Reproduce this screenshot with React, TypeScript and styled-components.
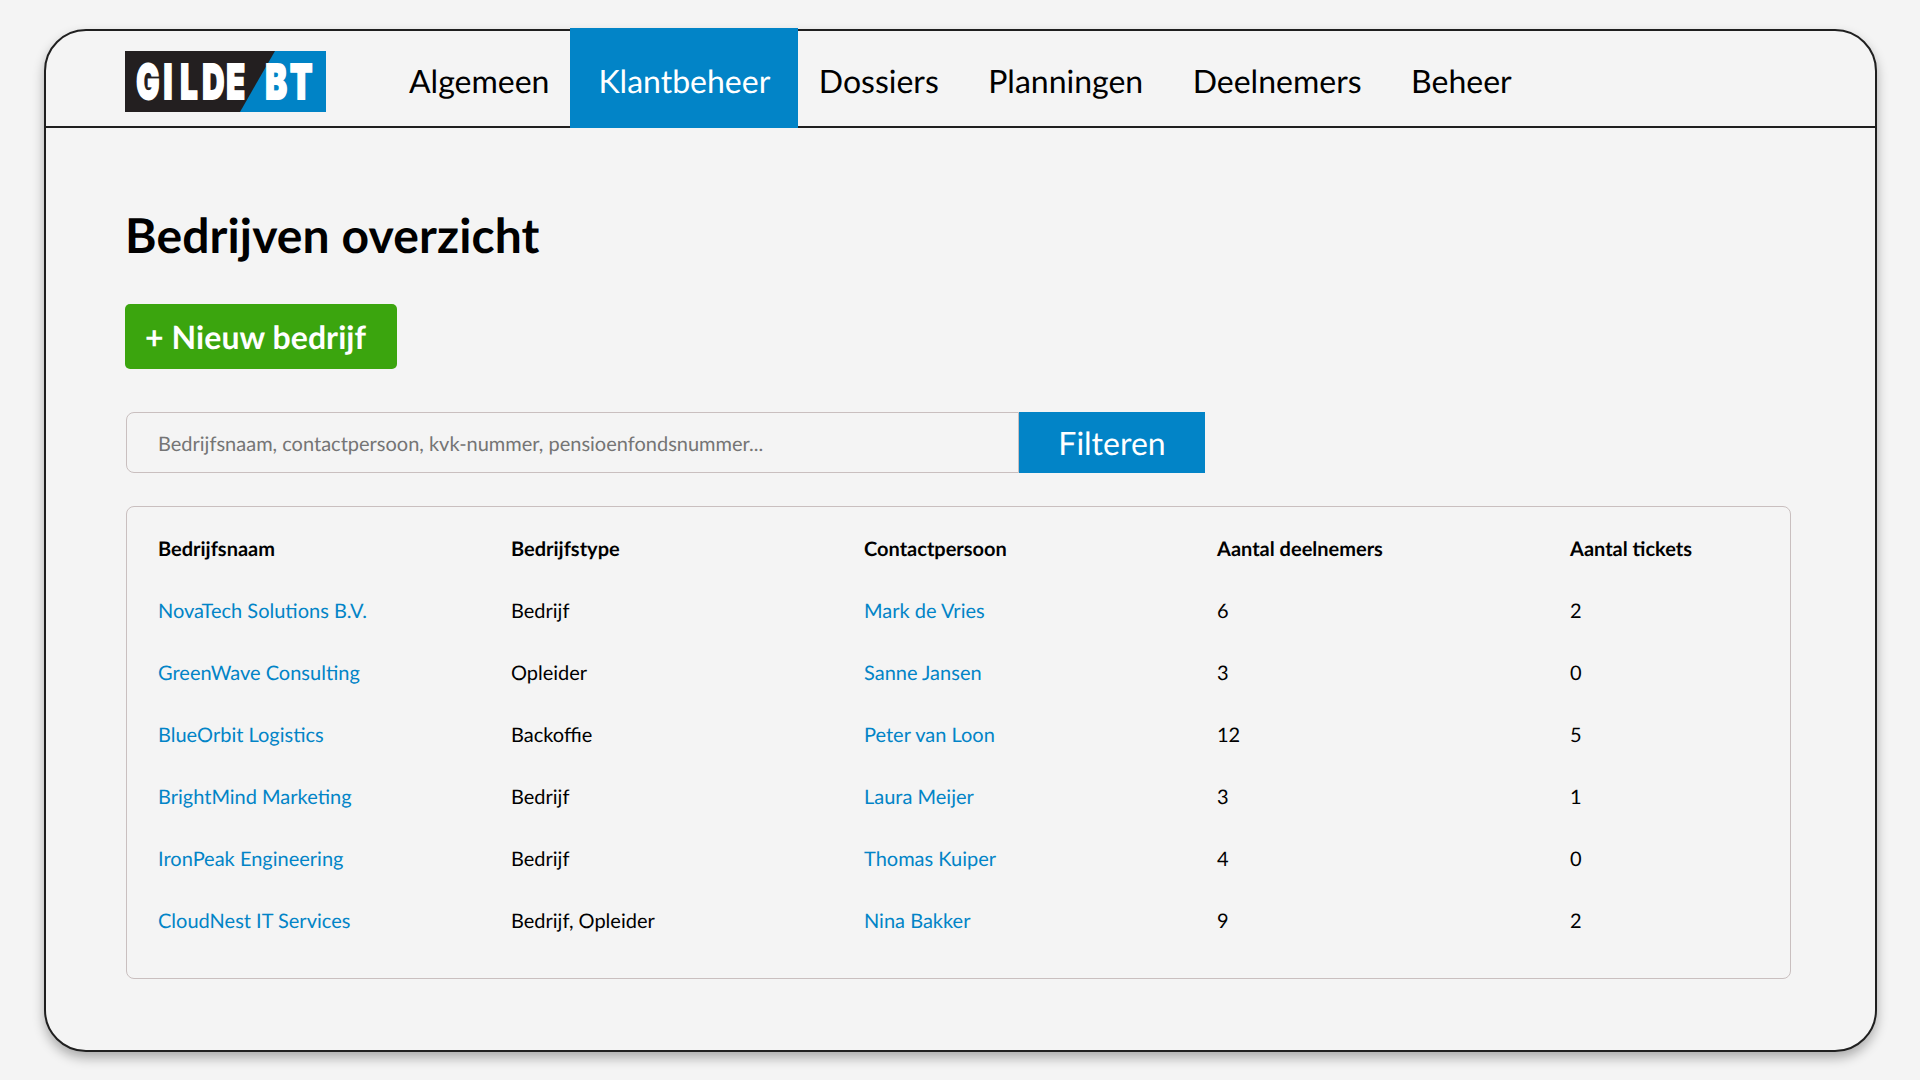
import React from "react";
import styled, { createGlobalStyle } from "styled-components";

const Global = createGlobalStyle`
  html, body { margin: 0; padding: 0; background: #f4f4f4; }
  body { font-family: Lato, "Noto Sans", sans-serif; color: #000; text-rendering: geometricPrecision; }
  * { box-sizing: border-box; }
`;

const Page = styled.div`
  width: 1920px;
  height: 1080px;
  padding: 29px 43px 28px 44px;
  overflow: hidden;
`;

const Frame = styled.div`
  height: 100%;
  border: 2px solid #1f1f1f;
  border-radius: 42px;
  background: #f4f4f4;
  box-shadow: 0 6px 12px rgba(0, 0, 0, 0.3);
`;

const Header = styled.header`
  height: 97px;
  border-bottom: 2px solid #1f1f1f;
  display: flex;
  align-items: flex-start;
  padding-left: 79px;
`;

const LogoWrap = styled.div`
  width: 201px;
  height: 61px;
  margin-top: 20px;
  margin-right: 58.25px;
  flex: none;
`;

const Nav = styled.nav`
  display: flex;
  margin-top: -3px;
`;

const NavItem = styled.a<{ $active?: boolean }>`
  height: 100px;
  margin: 0 ${(p) => (p.$active ? "-4.25px 0 -3.75px" : "0")};
  padding: 4px ${(p) => (p.$active ? "28px" : "24.75px")} 0;
  display: flex;
  align-items: center;
  font-size: 32px;
  color: ${(p) => (p.$active ? "#fff" : "#000")};
  background: ${(p) => (p.$active ? "#0284c7" : "transparent")};
  position: relative;
`;

const Main = styled.main`
  padding: 79px 69px 0 79px;
`;

const Title = styled.h1`
  margin: 0;
  font-size: 48px;
  font-weight: 700;
  line-height: 58px;
  letter-spacing: 0.12px;
`;

const AddButton = styled.button`
  display: block;
  margin-top: 39px;
  width: 272px;
  height: 65px;
  padding: 0 0 0 20px;
  border: none;
  border-radius: 5px;
  background: #3ba50e;
  color: #fff;
  font: 700 32px Lato, sans-serif;
  letter-spacing: 0.08px;
  text-rendering: geometricPrecision;
  text-align: left;
`;

const SearchRow = styled.form`
  display: flex;
  margin-top: 43px;
  margin-left: 1px;
`;

const SearchInput = styled.input`
  width: 893px;
  height: 61px;
  padding: 2px 31px 0;
  border: 1px solid #c9bfbf;
  border-radius: 8px 0 0 8px;
  background: transparent;
  font: 400 20px Lato, sans-serif;
  text-rendering: geometricPrecision;
  color: #000;
  &::placeholder { color: #757575; opacity: 1; }
`;

const FilterButton = styled.button`
  width: 186px;
  height: 61px;
  padding: 0;
  border: none;
  background: #0284c7;
  color: #fff;
  font: 400 32px Lato, sans-serif;
  text-rendering: geometricPrecision;
`;

const TableCard = styled.section`
  margin-top: 33px;
  margin-left: 1px;
  width: 1665px;
  height: 473px;
  padding: 11px 31px;
  border: 1px solid #c9bfbf;
  border-radius: 8px;
`;

const Table = styled.table`
  border-collapse: collapse;
  table-layout: fixed;
  width: 1765px;
`;

const Th = styled.th`
  width: 353px;
  height: 62px;
  padding: 0;
  text-align: left;
  font-size: 20px;
  font-weight: 700;
`;

const Td = styled.td`
  height: 62px;
  padding: 0;
  font-size: 20px;
`;

const CellLink = styled.a`
  color: #0284c7;
`;

const rows = [
  ["NovaTech Solutions B.V.", "Bedrijf", "Mark de Vries", "6", "2"],
  ["GreenWave Consulting", "Opleider", "Sanne Jansen", "3", "0"],
  ["BlueOrbit Logistics", "Backoffie", "Peter van Loon", "12", "5"],
  ["BrightMind Marketing", "Bedrijf", "Laura Meijer", "3", "1"],
  ["IronPeak Engineering", "Bedrijf", "Thomas Kuiper", "4", "0"],
  ["CloudNest IT Services", "Bedrijf, Opleider", "Nina Bakker", "9", "2"],
];

const nav = ["Algemeen", "Klantbeheer", "Dossiers", "Planningen", "Deelnemers", "Beheer"];

const Logo = () => (
  <svg width="201" height="61" viewBox="0 0 201 61">
    <defs>
      <clipPath id="logoDark">
        <polygon points="0,0 150,0 115,61 0,61" />
      </clipPath>
    </defs>
    <rect width="201" height="61" fill="#231f20" />
    <polygon points="150,0 201,0 201,61 115,61" fill="#0083c6" />
    <g
      fontFamily="Inter, 'Liberation Sans', sans-serif"
      fontWeight="900"
      fontSize="48"
      fill="#fff"
      stroke="#fff"
      strokeWidth="2"
      strokeLinejoin="miter"
    >
      <g clipPath="url(#logoDark)">
        <text transform="scale(0.64 1)" x="17.6 60 86.2 120.6 158.3" y="48">GILDE</text>
      </g>
      <text transform="scale(0.68 1)" x="206.4 242.6" y="48">BT</text>
    </g>
  </svg>
);

export default function App() {
  return (
    <Page>
      <Global />
      <Frame>
        <Header>
          <LogoWrap><Logo /></LogoWrap>
          <Nav>
            {nav.map((n) => (
              <NavItem key={n} $active={n === "Klantbeheer"}>{n}</NavItem>
            ))}
          </Nav>
        </Header>
        <Main>
          <Title>Bedrijven overzicht</Title>
          <AddButton>+ Nieuw bedrijf</AddButton>
          <SearchRow>
            <SearchInput placeholder="Bedrijfsnaam, contactpersoon, kvk-nummer, pensioenfondsnummer..." />
            <FilterButton type="button">Filteren</FilterButton>
          </SearchRow>
          <TableCard>
            <Table>
              <thead>
                <tr>
                  {["Bedrijfsnaam", "Bedrijfstype", "Contactpersoon", "Aantal deelnemers", "Aantal tickets"].map((h) => (
                    <Th key={h}>{h}</Th>
                  ))}
                </tr>
              </thead>
              <tbody>
                {rows.map((r) => (
                  <tr key={r[0]}>
                    <Td><CellLink>{r[0]}</CellLink></Td>
                    <Td>{r[1]}</Td>
                    <Td><CellLink>{r[2]}</CellLink></Td>
                    <Td>{r[3]}</Td>
                    <Td>{r[4]}</Td>
                  </tr>
                ))}
              </tbody>
            </Table>
          </TableCard>
        </Main>
      </Frame>
    </Page>
  );
}
